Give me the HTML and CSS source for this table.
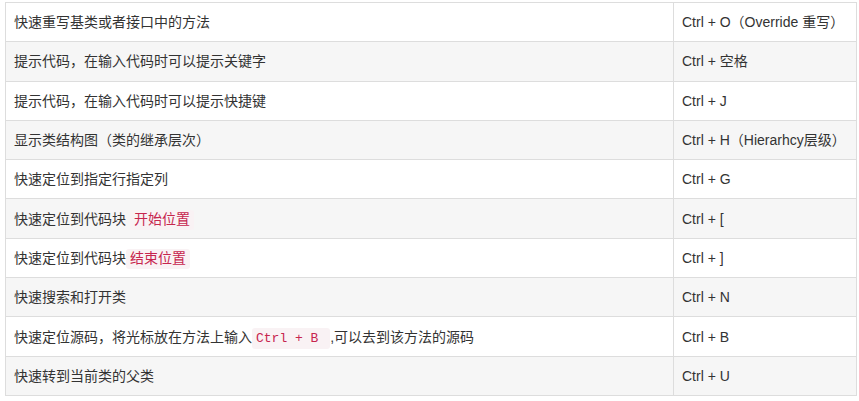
FILE: index.html
```
<!DOCTYPE html>
<html lang="zh-CN">
<head>
	<meta charset="UTF-8">
	<meta name="viewport" content="width=device-width, initial-scale=1.0">
	<link rel="stylesheet" href="styles.css">
</head>
<body>
	<table class="keys">
		<tbody>
			<tr>
				<td class="desc">快速重写基类或者接口中的方法</td>
				<td>Ctrl + O（Override 重写）</td>
			</tr>
			<tr>
				<td class="desc">提示代码，在输入代码时可以提示关键字</td>
				<td>Ctrl + 空格</td>
			</tr>
			<tr>
				<td class="desc">提示代码，在输入代码时可以提示快捷键</td>
				<td>Ctrl + J</td>
			</tr>
			<tr>
				<td class="desc">显示类结构图（类的继承层次）</td>
				<td>Ctrl + H（Hierarhcy层级）</td>
			</tr>
			<tr>
				<td class="desc">快速定位到指定行指定列</td>
				<td>Ctrl + G</td>
			</tr>
			<tr>
				<td class="desc">快速定位到代码块 <code class="cjk">开始位置</code></td>
				<td>Ctrl + [</td>
			</tr>
			<tr>
				<td class="desc">快速定位到代码块<code class="cjk">结束位置</code></td>
				<td>Ctrl + ]</td>
			</tr>
			<tr>
				<td class="desc">快速搜索和打开类</td>
				<td>Ctrl + N</td>
			</tr>
			<tr>
				<td class="desc">快速定位源码，将光标放在方法上输入<code>Ctrl + B </code>,可以去到该方法的源码</td>
				<td>Ctrl + B</td>
			</tr>
			<tr>
				<td class="desc">快速转到当前类的父类</td>
				<td>Ctrl + U</td>
			</tr>
		</tbody>
	</table>
</body>
</html>
```

FILE: styles.css
```
* {
	margin: 0;
	padding: 0;
	box-sizing: border-box;
}

body {
	background: #fff;
	color: #333;
	font-family: "Liberation Sans", "Noto Sans CJK SC", sans-serif;
	font-size: 14px;
}

.keys {
	margin: 2px 0 0 5px;
	width: 852px;
	border-collapse: collapse;
	border: 1px solid #ddd;
}

.keys td {
	border: 1px solid #ddd;
	padding: 0 8px;
	height: 39.3px;
	line-height: 18px;
	vertical-align: middle;
	white-space: nowrap;
}

.keys td.desc {
	width: 668px;
}

.keys tr:nth-child(even) {
	background: #f6f6f6;
}

code {
	font-family: "Liberation Mono", "DejaVu Sans Mono", "Noto Sans CJK SC", monospace;
	font-size: 13px;
	line-height: 1;
	color: #c7254e;
	background: #f9f2f4;
	padding: 3px 4px;
	border-radius: 3px;
}

code.cjk {
	font-size: 14px;
	padding: 2px 4px;
}
```
